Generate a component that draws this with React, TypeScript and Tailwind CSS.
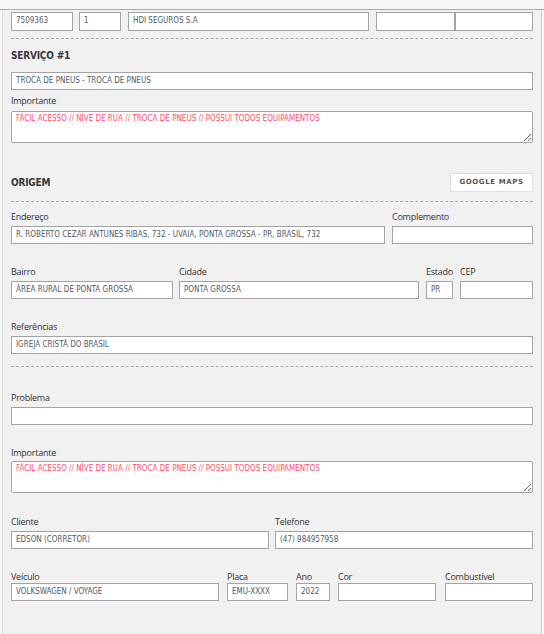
import React from "react";

const inputFont = { fontFamily: '"DejaVu Sans Condensed", "DejaVu Sans", sans-serif', fontStretch: "condensed" } as React.CSSProperties;

function Box({ w, value = "", red = false, h = "h-[18px]" }: { w: string; value?: string; red?: boolean; h?: string }) {
  return (
    <div
      className={`${w} ${h} shrink-0 border border-[#a3a3a3] bg-white px-[4px] text-[8px] leading-[16px] whitespace-nowrap overflow-hidden ${red ? "text-[#ff4f6e]" : "text-[#505a66]"}`}
      style={inputFont}
    >
      {value}
    </div>
  );
}

function Label({ children, className = "" }: { children: React.ReactNode; className?: string }) {
  return (
    <div className={`h-[12px] text-[9px] leading-[12px] text-[#3a3030] whitespace-nowrap ${className}`} style={{ fontFamily: '"Open Sans", "Noto Sans", sans-serif', letterSpacing: "-0.25px" }}>
      {children}
    </div>
  );
}

function Field({ label, w, value = "", gap = "mt-[3px]" }: { label: string; w: string; value?: string; gap?: string }) {
  return (
    <div className={`${w} shrink-0 flex flex-col`}>
      <Label>{label}</Label>
      <div className={gap}>
        <Box w="w-full" value={value} />
      </div>
    </div>
  );
}

function TextArea({ value }: { value: string }) {
  return (
    <textarea
      readOnly
      value={value}
      className="block w-full h-[32px] border border-[#a3a3a3] rounded-[2px] bg-white px-[4px] pt-[1px] text-[8px] leading-[12px] text-[#ff4f6e] outline-none"
      style={inputFont}
    />
  );
}

function Heading({ children }: { children: React.ReactNode }) {
  return (
    <div className="text-[10px] font-bold text-[#383838] leading-[14px]" style={{ fontFamily: '"DejaVu Sans Condensed", "DejaVu Sans", sans-serif', fontStretch: "condensed", letterSpacing: "-0.2px" }}>
      {children}
    </div>
  );
}

function Dash({ className = "" }: { className?: string }) {
  return <div className={`border-t border-dashed border-[#a9a9a9] ${className}`} />;
}

const IMPORTANTE = "FÁCIL ACESSO // NÍVE DE RUA // TROCA DE PNEUS // POSSUI TODOS EQUIPAMENTOS";

export default function App() {
  return (
    <div className="w-[544px] min-h-[634px] bg-[#f7f7f7] pt-[9px]">
      <div className="border-t border-[#a8c23c]">
        <div className="ml-[2px] w-[540px] min-h-[624px] bg-[#f1f1f1] border-l border-r border-l-[#dcdcdc] border-r-[#cfcfcf] px-[8px]">
          {/* Row 1 */}
          <div className="pt-[2px] flex">
            <Box w="w-[62px]" h="h-[19px]" value="7509363" />
            <div className="w-[6px]" />
            <Box w="w-[42px]" h="h-[19px]" value="1" />
            <div className="w-[7px]" />
            <Box w="w-[241px]" h="h-[19px]" value="HDI SEGUROS S.A" />
            <div className="w-[7px]" />
            <Box w="w-[79px]" h="h-[19px]" />
            <Box w="w-[78px]" h="h-[19px]" />
          </div>
          <Dash className="mt-[7px]" />

          {/* Serviço */}
          <div className="mt-[10px]">
            <Heading>SERVIÇO #1</Heading>
          </div>
          <div className="mt-[9px]">
            <Box w="w-full" value="TROCA DE PNEUS - TROCA DE PNEUS" />
          </div>
          <Label className="mt-[5px]">Importante</Label>
          <div className="mt-[4px]">
            <TextArea value={IMPORTANTE} />
          </div>

          {/* Origem */}
          <div className="mt-[30px] flex items-center justify-between h-[19px]">
            <Heading>ORIGEM</Heading>
            <div
              className="w-[83px] h-[19px] bg-white border border-[#dedede] flex items-center justify-center text-[7px] font-bold text-[#555] tracking-[0.6px]"
              style={{ fontFamily: '"DejaVu Sans", Verdana, sans-serif' }}
            >
              GOOGLE MAPS
            </div>
          </div>
          <Dash className="mt-[9px]" />

          <div className="mt-[9px] flex gap-[7px]">
            <Field label="Endereço" w="w-[374px]" value="R. ROBERTO CEZAR ANTUNES RIBAS, 732 - UVAIA, PONTA GROSSA - PR, BRASIL, 732" />
            <Field label="Complemento" w="w-[141px]" />
          </div>

          <div className="mt-[22px] flex">
            <Field label="Bairro" w="w-[162px]" value="ÁREA RURAL DE PONTA GROSSA" />
            <div className="w-[6px]" />
            <Field label="Cidade" w="w-[240px]" value="PONTA GROSSA" />
            <div className="w-[7px]" />
            <Field label="Estado" w="w-[27px]" value="PR" />
            <div className="w-[7px]" />
            <Field label="CEP" w="w-[73px]" />
          </div>

          <div className="mt-[22px]">
            <Field label="Referências" w="w-full" value="IGREJA CRISTÃ DO BRASIL" />
          </div>

          <Dash className="mt-[12px]" />

          <div className="mt-[25px]">
            <Field label="Problema" w="w-full" />
          </div>

          <Label className="mt-[22px]">Importante</Label>
          <div className="mt-[2px]">
            <TextArea value={IMPORTANTE} />
          </div>

          <div className="mt-[23px] flex gap-[6px]">
            <Field label="Cliente" w="w-[258px]" value="EDSON (CORRETOR)" />
            <Field label="Telefone" w="w-[258px]" value="(47) 984957958" />
          </div>

          <div className="mt-[22px] flex">
            <Field label="Veículo" w="w-[208px]" value="VOLKSWAGEN / VOYAGE" gap="mt-0" />
            <div className="w-[8px]" />
            <Field label="Placa" w="w-[61px]" value="EMU-XXXX" gap="mt-0" />
            <div className="w-[8px]" />
            <Field label="Ano" w="w-[34px]" value="2022" gap="mt-0" />
            <div className="w-[8px]" />
            <Field label="Cor" w="w-[98px]" gap="mt-0" />
            <div className="w-[9px]" />
            <Field label="Combustível" w="w-[88px]" gap="mt-0" />
          </div>
        </div>
      </div>
    </div>
  );
}
